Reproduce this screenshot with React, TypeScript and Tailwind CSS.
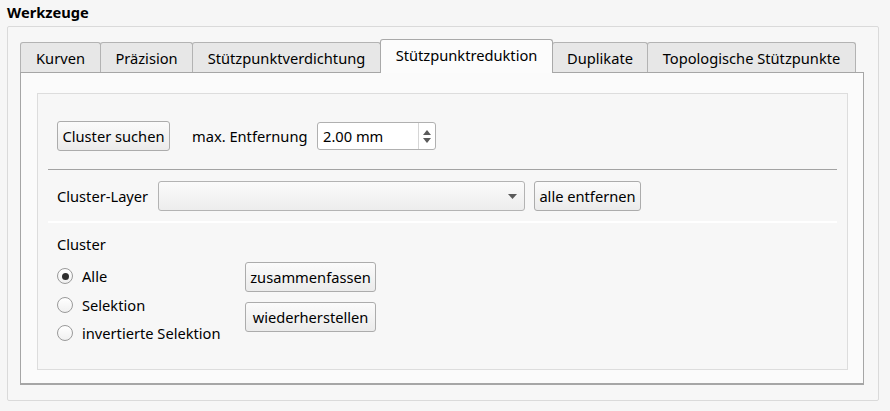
import React from 'react';

const tabs = [
  { label: 'Kurven', w: 'w-[81px]' },
  { label: 'Präzision', w: 'w-[93px]' },
  { label: 'Stützpunktverdichtung', w: 'w-[189px]' },
  { label: 'Stützpunktreduktion', w: 'w-[173px]', active: true },
  { label: 'Duplikate', w: 'w-[96px]' },
  { label: 'Topologische Stützpunkte', w: 'w-[209px]' },
];

function Button({ children, className = '' }: { children: React.ReactNode; className?: string }) {
  return (
    <button
      className={`h-[30px] px-[4px] rounded-[3px] border border-[#acacac] bg-gradient-to-b from-[#fbfbfb] to-[#ebebeb] text-[14.67px] text-black leading-none whitespace-nowrap ${className}`}
    >
      {children}
    </button>
  );
}

function Radio({ label, checked }: { label: string; checked?: boolean }) {
  return (
    <label className="flex items-center h-[28.5px] gap-[9px]">
      <span className="w-[16px] h-[16px] rounded-full border border-[#9a9a9a] bg-gradient-to-b from-[#ffffff] to-[#f0f0f0] flex items-center justify-center">
        {checked && <span className="w-[7px] h-[7px] rounded-full bg-[#2e2e2e]" />}
      </span>
      <span>{label}</span>
    </label>
  );
}

export default function App() {
  return (
    <div
      className="w-[890px] h-[411px] bg-[#f6f6f6] text-[14.67px] text-black leading-[20px] overflow-hidden"
      style={{ fontFamily: '"Noto Sans", "Open Sans", sans-serif' }}
    >
      {/* Titel */}
      <div className="h-[26px] pl-[7px] pt-[2px] font-bold">Werkzeuge</div>

      {/* Gruppe */}
      <div className="ml-[7px] w-[872px] h-[375px] border border-[#dadada] rounded-[2px] bg-[#f7f7f7] pl-[12px] pr-[15px] pt-[12px]">
        {/* Tab-Leiste */}
        <div className="flex items-end h-[33px]">
          {tabs.map((t, i) =>
            t.active ? (
              <div
                key={t.label}
                className={`${t.w} h-[34px] -mb-px ${i > 0 ? '-ml-px' : ''} relative z-10 bg-[#fcfcfc] border border-b-0 border-[#a9a9a9] rounded-t-[3px] flex items-center justify-center pb-[3px]`}
              >
                {t.label}
              </div>
            ) : (
              <div
                key={t.label}
                className={`${t.w} h-[30px] ${i > 0 ? '-ml-px' : ''} bg-[#e7e7e7] border border-b-0 border-[#b3b3b3] rounded-t-[3px] flex items-center justify-center pt-[1px]`}
              >
                {t.label}
              </div>
            )
          )}
        </div>

        {/* Tab-Inhalt */}
        <div className="w-[844px] h-[313px] border border-b-2 border-[#a6a6a6] bg-[#fbfbfb] pl-[16px] pt-[20px]">
          <div className="w-[811px] h-[277px] border border-[#dddddd] bg-[#f7f7f7] px-[10px]">
            {/* Cluster suchen */}
            <div className="flex items-center h-[30px] mt-[27px] pl-[9px]">
              <Button className="w-[113px]">Cluster suchen</Button>
              <span className="ml-[22px] w-[125px]">max. Entfernung</span>
              <div className="w-[119px] h-[28px] rounded-[3px] border border-[#b0b0b0] bg-white flex">
                <div className="flex-1 flex items-center pl-[5px]">2.00 mm</div>
                <div className="w-[17px] border-l border-[#d6d6d6] flex flex-col items-center justify-center gap-[3px]">
                  <svg width="8" height="5" viewBox="0 0 8 5">
                    <path d="M0 5 L4 0 L8 5 Z" fill="#5a5a5a" />
                  </svg>
                  <svg width="8" height="5" viewBox="0 0 8 5">
                    <path d="M0 0 L4 5 L8 0 Z" fill="#5a5a5a" />
                  </svg>
                </div>
              </div>
            </div>

            <div className="mt-[18px] h-px bg-[#a3a3a3]" />

            {/* Cluster-Layer */}
            <div className="flex items-center h-[30px] mt-[11px] pl-[9px]">
              <span className="w-[101px]">Cluster-Layer</span>
              <div className="w-[367px] h-[30px] rounded-[3px] border border-[#b3b3b3] bg-gradient-to-b from-[#fbfbfb] to-[#ededed] flex items-center justify-end pr-[7px]">
                <svg width="9" height="5" viewBox="0 0 9 5">
                  <path d="M0 0 L9 0 L4.5 5 Z" fill="#5a5a5a" />
                </svg>
              </div>
              <Button className="ml-[9px] w-[107px]">alle entfernen</Button>
            </div>

            <div className="mt-[10px] h-[2px] bg-white" />

            {/* Cluster */}
            <div className="pl-[9px]">
              <div className="mt-[11px] h-[20px]">Cluster</div>
              <div className="flex mt-[8px]">
                <div className="w-[188px] flex flex-col">
                  <Radio label="Alle" checked />
                  <Radio label="Selektion" />
                  <Radio label="invertierte Selektion" />
                </div>
                <div className="flex flex-col gap-[10px]">
                  <Button className="w-[131px]">zusammenfassen</Button>
                  <Button className="w-[131px]">wiederherstellen</Button>
                </div>
              </div>
            </div>
          </div>
        </div>
      </div>
    </div>
  );
}
